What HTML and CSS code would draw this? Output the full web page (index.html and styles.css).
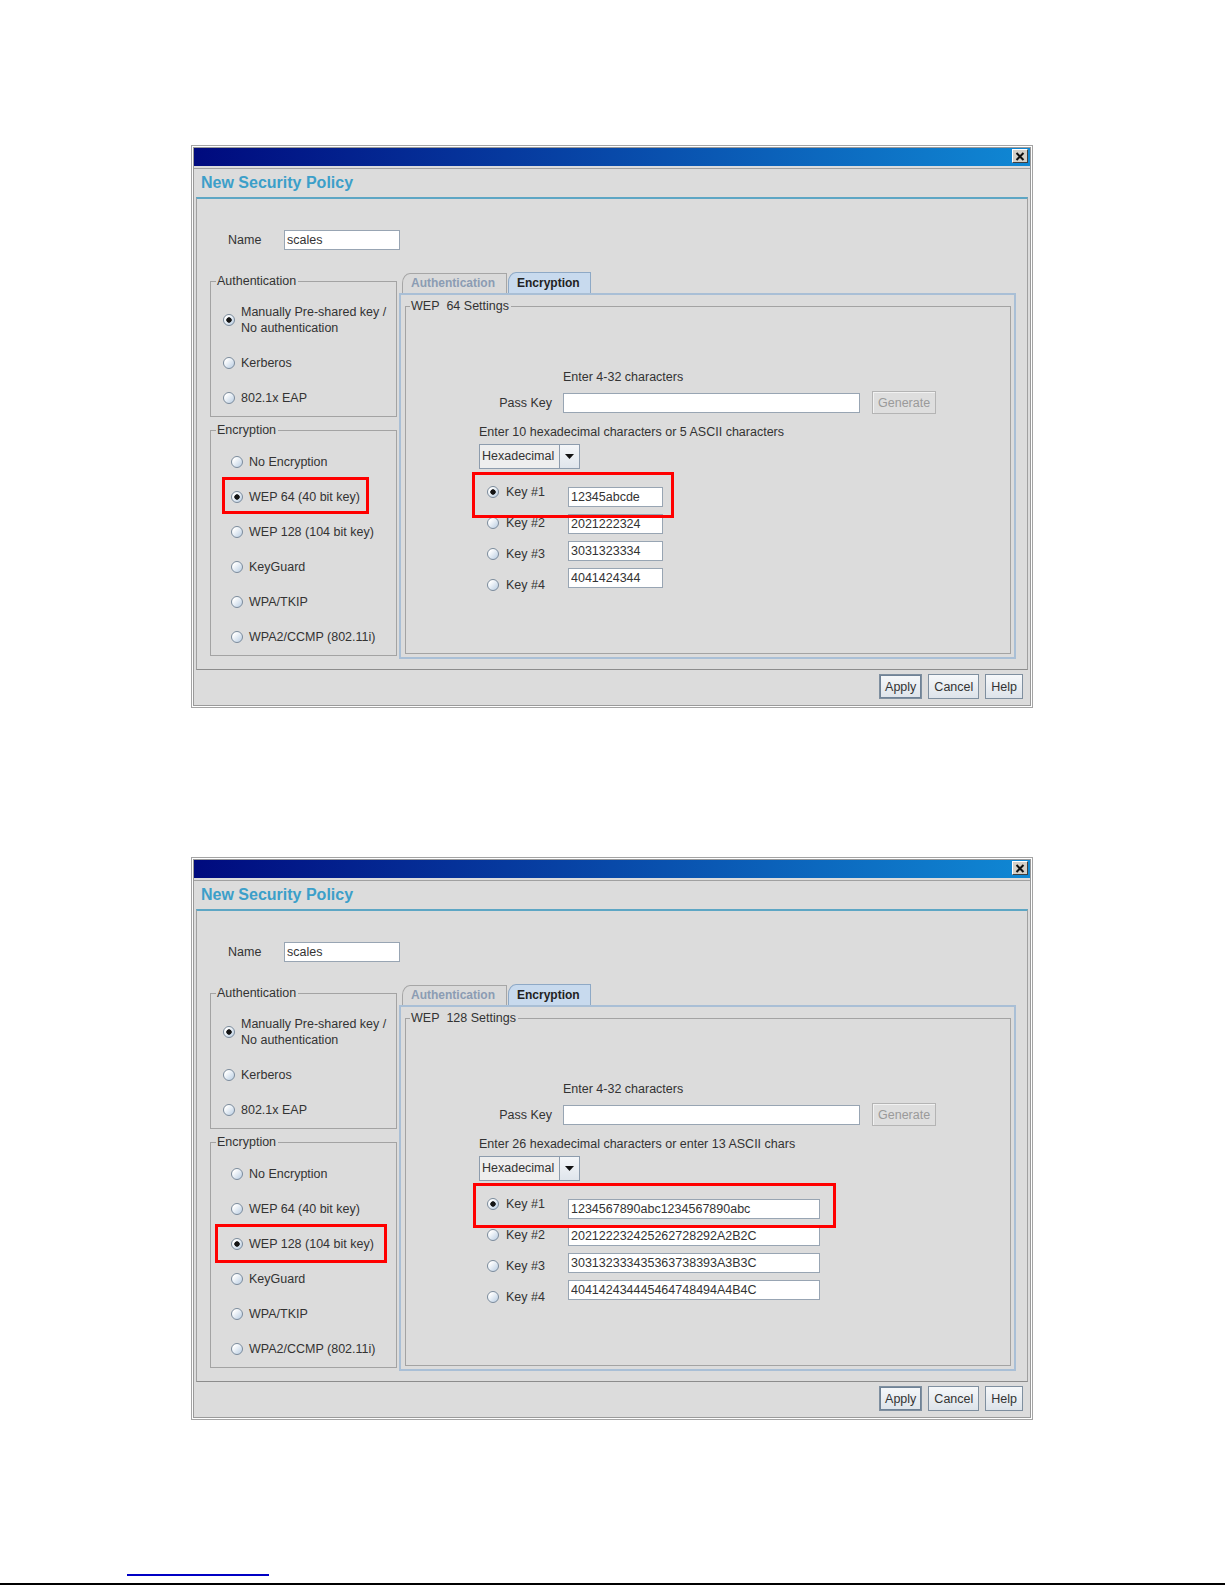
FILE: index.html
```html
<!DOCTYPE html>
<html lang="en">

<head>
    <meta charset="UTF-8">
    <meta name="viewport" content="width=device-width, initial-scale=1.0">
    <title>New Security Policy</title>
    <link rel="stylesheet" href="styles.css">
</head>

<body>

    <!-- Dialog 1 : WEP 64 -->
    <div class="window">
        <div class="frame">
            <div class="titlebar">
                <span class="close-btn">
                    <svg width="10" height="9" viewBox="0 0 10 9"><path d="M1.5 1 L8.5 8 M8.5 1 L1.5 8" stroke="#111" stroke-width="2"/></svg>
                </span>
            </div>
            <div class="root">
                <h2 class="dialog-title">New Security Policy</h2>
                <div class="panel">
                    <div class="name-row">
                        <label for="name1">Name</label>
                        <input type="text" id="name1" class="field name-field" value="scales">
                    </div>

                    <div class="columns">
                        <div class="left-col">
                            <fieldset class="group">
                                <legend>Authentication</legend>
                                <div class="options auth-options">
                                    <label class="option"><input type="radio" name="auth1" checked><span>Manually Pre-shared key /<br>No authentication</span></label>
                                    <label class="option"><input type="radio" name="auth1"><span>Kerberos</span></label>
                                    <label class="option"><input type="radio" name="auth1"><span>802.1x EAP</span></label>
                                </div>
                            </fieldset>
                            <fieldset class="group enc-group">
                                <legend>Encryption</legend>
                                <div class="options enc-options">
                                    <label class="option"><input type="radio" name="enc1"><span>No Encryption</span></label>
                                    <label class="option"><input type="radio" name="enc1" checked><span>WEP 64 (40 bit key)</span><span class="mark mark-wep64"></span></label>
                                    <label class="option"><input type="radio" name="enc1"><span>WEP 128 (104 bit key)</span></label>
                                    <label class="option"><input type="radio" name="enc1"><span>KeyGuard</span></label>
                                    <label class="option"><input type="radio" name="enc1"><span>WPA/TKIP</span></label>
                                    <label class="option"><input type="radio" name="enc1"><span>WPA2/CCMP (802.11i)</span></label>
                                </div>
                            </fieldset>
                        </div>

                        <div class="right-col">
                            <div class="tabs">
                                <span class="tab">Authentication</span>
                                <span class="tab active">Encryption</span>
                            </div>
                            <div class="tab-panel">
                                <fieldset class="group settings-group">
                                    <legend>WEP&nbsp; 64 Settings</legend>
                                    <div class="settings">
                                        <div class="hint pass-hint">Enter 4-32 characters</div>
                                        <div class="pass-row">
                                            <label for="pass1">Pass Key</label>
                                            <input type="text" id="pass1" class="field pass-field">
                                            <button class="btn gen-btn" disabled>Generate</button>
                                        </div>
                                        <div class="hint">Enter 10 hexadecimal characters or 5 ASCII characters</div>
                                        <div class="combo">
                                            <span class="combo-text">Hexadecimal</span>
                                            <span class="combo-arrow"><svg width="9" height="5" viewBox="0 0 9 5"><path d="M0 0 H9 L4.5 5 Z" fill="#111"/></svg></span>
                                        </div>
                                        <div class="keys">
                                            <div class="key-labels">
                                                <label class="option"><input type="radio" name="key1" checked><span>Key #1</span></label>
                                                <label class="option"><input type="radio" name="key1"><span>Key #2</span></label>
                                                <label class="option"><input type="radio" name="key1"><span>Key #3</span></label>
                                                <label class="option"><input type="radio" name="key1"><span>Key #4</span></label>
                                            </div>
                                            <div class="key-fields">
                                                <input type="text" class="field key-field" value="12345abcde">
                                                <input type="text" class="field key-field" value="2021222324">
                                                <input type="text" class="field key-field" value="3031323334">
                                                <input type="text" class="field key-field" value="4041424344">
                                            </div>
                                            <span class="mark mark-key64"></span>
                                        </div>
                                    </div>
                                </fieldset>
                            </div>
                        </div>
                    </div>
                </div>
                <div class="buttons">
                    <button class="btn default">Apply</button>
                    <button class="btn">Cancel</button>
                    <button class="btn">Help</button>
                </div>
            </div>
        </div>
    </div>

    <!-- Dialog 2 : WEP 128 -->
    <div class="window">
        <div class="frame">
            <div class="titlebar">
                <span class="close-btn">
                    <svg width="10" height="9" viewBox="0 0 10 9"><path d="M1.5 1 L8.5 8 M8.5 1 L1.5 8" stroke="#111" stroke-width="2"/></svg>
                </span>
            </div>
            <div class="root">
                <h2 class="dialog-title">New Security Policy</h2>
                <div class="panel">
                    <div class="name-row">
                        <label for="name2">Name</label>
                        <input type="text" id="name2" class="field name-field" value="scales">
                    </div>

                    <div class="columns">
                        <div class="left-col">
                            <fieldset class="group">
                                <legend>Authentication</legend>
                                <div class="options auth-options">
                                    <label class="option"><input type="radio" name="auth2" checked><span>Manually Pre-shared key /<br>No authentication</span></label>
                                    <label class="option"><input type="radio" name="auth2"><span>Kerberos</span></label>
                                    <label class="option"><input type="radio" name="auth2"><span>802.1x EAP</span></label>
                                </div>
                            </fieldset>
                            <fieldset class="group enc-group">
                                <legend>Encryption</legend>
                                <div class="options enc-options">
                                    <label class="option"><input type="radio" name="enc2"><span>No Encryption</span></label>
                                    <label class="option"><input type="radio" name="enc2"><span>WEP 64 (40 bit key)</span></label>
                                    <label class="option"><input type="radio" name="enc2" checked><span>WEP 128 (104 bit key)</span><span class="mark mark-wep128"></span></label>
                                    <label class="option"><input type="radio" name="enc2"><span>KeyGuard</span></label>
                                    <label class="option"><input type="radio" name="enc2"><span>WPA/TKIP</span></label>
                                    <label class="option"><input type="radio" name="enc2"><span>WPA2/CCMP (802.11i)</span></label>
                                </div>
                            </fieldset>
                        </div>

                        <div class="right-col">
                            <div class="tabs">
                                <span class="tab">Authentication</span>
                                <span class="tab active">Encryption</span>
                            </div>
                            <div class="tab-panel">
                                <fieldset class="group settings-group">
                                    <legend>WEP&nbsp; 128 Settings</legend>
                                    <div class="settings">
                                        <div class="hint pass-hint">Enter 4-32 characters</div>
                                        <div class="pass-row">
                                            <label for="pass2">Pass Key</label>
                                            <input type="text" id="pass2" class="field pass-field">
                                            <button class="btn gen-btn" disabled>Generate</button>
                                        </div>
                                        <div class="hint">Enter 26 hexadecimal characters or enter 13 ASCII chars</div>
                                        <div class="combo">
                                            <span class="combo-text">Hexadecimal</span>
                                            <span class="combo-arrow"><svg width="9" height="5" viewBox="0 0 9 5"><path d="M0 0 H9 L4.5 5 Z" fill="#111"/></svg></span>
                                        </div>
                                        <div class="keys">
                                            <div class="key-labels">
                                                <label class="option"><input type="radio" name="key2" checked><span>Key #1</span></label>
                                                <label class="option"><input type="radio" name="key2"><span>Key #2</span></label>
                                                <label class="option"><input type="radio" name="key2"><span>Key #3</span></label>
                                                <label class="option"><input type="radio" name="key2"><span>Key #4</span></label>
                                            </div>
                                            <div class="key-fields">
                                                <input type="text" class="field key-field wide" value="1234567890abc1234567890abc">
                                                <input type="text" class="field key-field wide" value="202122232425262728292A2B2C">
                                                <input type="text" class="field key-field wide" value="303132333435363738393A3B3C">
                                                <input type="text" class="field key-field wide" value="404142434445464748494A4B4C">
                                            </div>
                                            <span class="mark mark-key128"></span>
                                        </div>
                                    </div>
                                </fieldset>
                            </div>
                        </div>
                    </div>
                </div>
                <div class="buttons">
                    <button class="btn default">Apply</button>
                    <button class="btn">Cancel</button>
                    <button class="btn">Help</button>
                </div>
            </div>
        </div>
    </div>

    <div class="link-rule"></div>
    <div class="page-rule"></div>

</body>

</html>
```

FILE: styles.css
```css
/*-------------- Page -------------*/
html,
body {
    margin: 0;
}

body {
    background: #fff;
    font-family: "Liberation Sans", Arial, sans-serif;
    font-size: 12.5px;
    color: #333;
    padding-top: 145px;
    height: 1585px;
    box-sizing: border-box;
    overflow: hidden;
}

/*-------------- Window frame -------------*/
.window {
    width: 842px;
    height: 563px;
    margin-left: 191px;
    box-sizing: border-box;
    border: 1px solid #a4a4a4;
    padding: 1px;
    background: #fff;
}

.window + .window {
    margin-top: 149px;
}

.frame {
    height: 100%;
    box-sizing: border-box;
    border: 1px solid #9a9a9a;
    background: #dcdcdc;
    display: flex;
    flex-direction: column;
}

.titlebar {
    height: 18px;
    flex: none;
    box-sizing: border-box;
    padding: 1px 2px 0 0;
    display: flex;
    justify-content: flex-end;
    align-items: flex-start;
    background: linear-gradient(to right, #000a7e, #1088d4);
}

.close-btn {
    width: 16px;
    height: 14px;
    box-sizing: border-box;
    background: #d4d0c8;
    border: 1px solid;
    border-color: #fff #404040 #404040 #fff;
    display: flex;
    align-items: center;
    justify-content: center;
}

.root {
    flex: 1;
    margin-top: 2px;
    border-top: 1px solid #a0a0a0;
    display: flex;
    flex-direction: column;
}

.dialog-title {
    margin: 0;
    height: 28px;
    flex: none;
    box-sizing: border-box;
    padding: 4px 0 0 7px;
    font-size: 16px;
    line-height: 20px;
    font-weight: bold;
    color: #3c9fc9;
}

/* main panel under the title */
.panel {
    flex: 1;
    margin: 0 2px;
    border-top: 2px solid #5da6c4;
    border-left: 1px solid #a0a0a0;
    border-right: 1px solid #a0a0a0;
    border-bottom: 1px solid #8c8c8c;
}

.name-row {
    display: flex;
    align-items: center;
    margin: 31px 0 0 31px;
}

.name-row label {
    width: 56px;
}

/*-------------- Inputs -------------*/
.field {
    height: 20px;
    box-sizing: border-box;
    margin: 0;
    padding: 0 2px;
    border: 1px solid #98a5b3;
    background: #fff;
    font-family: "Liberation Sans", Arial, sans-serif;
    font-size: 12.5px;
    color: #333;
    outline: none;
}

.name-field {
    width: 116px;
}

.pass-field {
    width: 297px;
}

.key-field {
    width: 95px;
}

.key-field.wide {
    width: 252px;
}

input[type="radio"] {
    appearance: none;
    width: 12px;
    height: 12px;
    margin: 0;
    flex: none;
    border-radius: 50%;
    border: 1px solid #7b8b9c;
    background: linear-gradient(135deg, #ffffff 20%, #b9cde2);
}

input[type="radio"]:checked {
    background: radial-gradient(circle, #151515 0 2.4px, transparent 3px), linear-gradient(135deg, #ffffff 20%, #b9cde2);
}

/*-------------- Columns -------------*/
.columns {
    display: flex;
    gap: 2px;
    margin: 22px 0 0 13px;
}

.left-col {
    width: 187px;
    padding-top: 2px;
}

.right-col {
    width: 617px;
}

/* group boxes */
.group {
    margin: 0;
    padding: 0;
    min-width: 0;
    border: 1px solid #a3a3a3;
}

.group legend {
    margin-left: 5px;
    padding: 0 2px 0 1px;
    line-height: 14px;
}

.enc-group {
    margin-top: 6px;
}

.options {
    display: flex;
    flex-direction: column;
}

.auth-options {
    gap: 19px;
    padding: 16px 0 10px 12px;
}

.enc-options {
    gap: 19px;
    padding: 17px 0 10px 20px;
}

.option {
    position: relative;
    display: flex;
    align-items: center;
    gap: 6px;
    line-height: 16px;
}

/* red annotation boxes */
.mark {
    position: absolute;
    box-sizing: border-box;
    border: 3px solid #f00;
}

.mark-wep64 {
    left: -9px;
    top: -12px;
    width: 147px;
    height: 37px;
}

.mark-wep128 {
    left: -16px;
    top: -12px;
    width: 172px;
    height: 39px;
}

/*-------------- Tabs -------------*/
.tabs {
    display: flex;
    align-items: flex-end;
    height: 21px;
    padding-left: 3px;
}

.tab {
    height: 20px;
    box-sizing: border-box;
    padding: 0 11px 0 8px;
    border: 1px solid #a6a6a6;
    border-bottom: none;
    border-top-left-radius: 8px 10px;
    font-size: 12px;
    font-weight: bold;
    line-height: 19px;
    color: #8b9cb3;
    background: #dadada;
}

.tab.active {
    height: 21px;
    margin-left: 1px;
    padding: 0 10px 0 8px;
    border-color: #8ea9c6;
    background: #c8daee;
    color: #222;
    line-height: 20px;
}

.tab-panel {
    height: 366px;
    box-sizing: border-box;
    border: 2px solid #a9bfd6;
    padding: 4px 3px 3px 4px;
    display: flex;
    flex-direction: column;
}

.settings-group {
    flex: 1;
}

.settings-group legend {
    margin-left: 4px;
}

.settings {
    padding: 56px 0 0 73px;
}

.hint {
    line-height: 16px;
}

.pass-hint {
    margin-left: 84px;
}

.pass-row {
    display: flex;
    align-items: center;
    height: 23px;
    margin: 6px 0 10px;
}

.pass-row label {
    width: 73px;
    margin-right: 11px;
    text-align: right;
}

/*-------------- Combo -------------*/
.combo {
    display: flex;
    width: 101px;
    height: 25px;
    box-sizing: border-box;
    margin-top: 4px;
    border: 1px solid #8d9cad;
    background: #eeeeee;
}

.combo-text {
    flex: 1;
    padding-left: 2px;
    line-height: 23px;
}

.combo-arrow {
    width: 19px;
    border-left: 1px solid #8d9cad;
    background: linear-gradient(#f4f6f8, #dfe5ec);
    display: flex;
    align-items: center;
    justify-content: center;
}

/*-------------- Keys -------------*/
.keys {
    position: relative;
    display: flex;
    margin-top: 15px;
}

.key-labels {
    width: 89px;
    box-sizing: border-box;
    padding-left: 8px;
    display: flex;
    flex-direction: column;
    gap: 15px;
}

.key-labels .option {
    gap: 7px;
}

.key-fields {
    display: flex;
    flex-direction: column;
    gap: 7px;
    padding-top: 3px;
}

.mark-key64 {
    left: -7px;
    top: -12px;
    width: 202px;
    height: 46px;
}

.mark-key128 {
    left: -6px;
    top: -13px;
    width: 363px;
    height: 45px;
}

/*-------------- Buttons -------------*/
.btn {
    height: 25px;
    box-sizing: border-box;
    margin: 0;
    padding: 0 5px;
    border: 1px solid #7f8f9f;
    background: linear-gradient(#f6f8fa, #dde3ea);
    font-family: "Liberation Sans", Arial, sans-serif;
    font-size: 12.5px;
    color: #333;
}

.btn.default {
    box-shadow: inset 0 0 0 1px #6f8296;
}

.gen-btn {
    width: 64px;
    height: 23px;
    margin-left: 12px;
    border-color: #b4b4b4;
    background: #dedede;
    box-shadow: inset 1px 1px 0 #f2f2f2;
    color: #9a9a9a;
}

.buttons {
    height: 35px;
    flex: none;
    box-sizing: border-box;
    padding: 4px 7px 0 0;
    display: flex;
    justify-content: flex-end;
    align-items: flex-start;
    gap: 6px;
}

/*-------------- Bottom rules -------------*/
.link-rule {
    width: 142px;
    margin: 154px 0 0 127px;
    border-top: 2px solid #0000c4;
}

.page-rule {
    margin-top: 7px;
    border-top: 2px solid #000;
}
```
